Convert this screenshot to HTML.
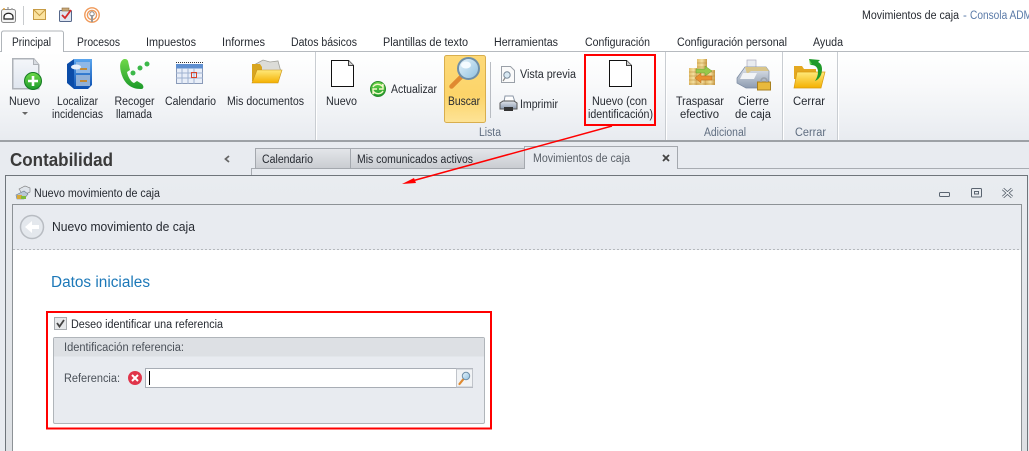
<!DOCTYPE html>
<html><head><meta charset="utf-8"><style>
html,body{margin:0;padding:0;background:#fff;width:1029px;height:451px;overflow:hidden}
svg{display:block}
text{font-family:"Liberation Sans",sans-serif;font-size:11.5px;fill:#262a31}
.g{fill:#5f6d80}
</style></head><body>
<svg xmlns="http://www.w3.org/2000/svg" width="1029" height="451" viewBox="0 0 1029 451">
<defs>
<linearGradient id="rib" x1="0" y1="0" x2="0" y2="1"><stop offset="0" stop-color="#fff"/><stop offset=".35" stop-color="#f9fafb"/><stop offset="1" stop-color="#e8ebf0"/></linearGradient>
<linearGradient id="bus" x1="0" y1="0" x2="0" y2="1"><stop offset="0" stop-color="#fdd978"/><stop offset=".6" stop-color="#fcd469"/><stop offset="1" stop-color="#fde397"/></linearGradient>
<linearGradient id="tab" x1="0" y1="0" x2="0" y2="1"><stop offset="0" stop-color="#e4e6ea"/><stop offset="1" stop-color="#c9ccd1"/></linearGradient>
<linearGradient id="hdr" x1="0" y1="0" x2="0" y2="1"><stop offset="0" stop-color="#e9ecf0"/><stop offset="1" stop-color="#dde0e4"/></linearGradient>
<linearGradient id="fold" x1="0" y1="0" x2="0" y2="1"><stop offset="0" stop-color="#ffe97a"/><stop offset="1" stop-color="#f4b000"/></linearGradient>
<linearGradient id="blue" x1="0" y1="0" x2="0" y2="1"><stop offset="0" stop-color="#5aa5ee"/><stop offset="1" stop-color="#0b4fb0"/></linearGradient>
<linearGradient id="grn" x1="0" y1="0" x2="0" y2="1"><stop offset="0" stop-color="#6fd84a"/><stop offset="1" stop-color="#1c9a2a"/></linearGradient>
<linearGradient id="lens" x1="0" y1="0" x2="1" y2="1"><stop offset="0" stop-color="#e8f4fb"/><stop offset="1" stop-color="#8fc0e0"/></linearGradient>
<linearGradient id="doc" x1="0" y1="0" x2="0" y2="1"><stop offset="0" stop-color="#f4f6fa"/><stop offset="1" stop-color="#dfe5ee"/></linearGradient>
<linearGradient id="coin" x1="0" y1="0" x2="1" y2="0"><stop offset="0" stop-color="#e2bd6a"/><stop offset=".5" stop-color="#f3dfa0"/><stop offset="1" stop-color="#c99a45"/></linearGradient>
<linearGradient id="reg" x1="0" y1="0" x2="0" y2="1"><stop offset="0" stop-color="#dfe4ea"/><stop offset="1" stop-color="#8d9bb0"/></linearGradient>
</defs>

<!-- ribbon -->
<rect x="0" y="52" width="1029" height="88" fill="url(#rib)"/>
<rect x="0" y="51" width="1029" height="1" fill="#b6babf"/>
<rect x="0" y="140" width="1029" height="2" fill="#9da1a6"/>
<rect x="0" y="142" width="1029" height="309" fill="#e8ebf0"/>
<path d="M1.500 52V33a2 2 0 0 1 2-2h58a2 2 0 0 1 2 2v19" fill="#fff" stroke="#b0b5ba"/>
<rect x="2" y="50" width="61" height="3" fill="#fff"/>

<!-- group separators -->
<g fill="#c9cdd2"><rect x="315" y="52" width="1" height="88"/><rect x="665" y="52" width="1" height="88"/><rect x="782" y="52" width="1" height="88"/><rect x="837" y="52" width="1" height="88"/></g>
<g fill="#fff"><rect x="316" y="52" width="1" height="88"/><rect x="666" y="52" width="1" height="88"/><rect x="783" y="52" width="1" height="88"/><rect x="838" y="52" width="1" height="88"/></g>

<!-- quick access -->
<rect x="1.500" y="9.500" width="14" height="13" rx="2" fill="#f4f4f4" stroke="#8a8a8a"/>
<path d="M4 17c0-5 9-5 9 0v2H4z" fill="#fff" stroke="#222" stroke-width="1.200"/>
<circle cx="4" cy="9" r="1" fill="#e2a33c"/><circle cx="8" cy="8" r="1" fill="#aaa"/><circle cx="12" cy="9" r="1" fill="#aaa"/>
<rect x="23" y="6" width="1" height="19" fill="#c8cbce"/>
<rect x="33.500" y="9.500" width="12" height="10" fill="#fbe3a0" stroke="#c79c45"/>
<path d="M33.500 9.500l6 6 6-6" fill="none" stroke="#c79c45"/>
<rect x="59.500" y="10.500" width="12" height="11" rx="1" fill="#dfe6f2" stroke="#55678a"/>
<rect x="62" y="8" width="7" height="3" fill="#c8a878" stroke="#8a6a3a" stroke-width=".6"/>
<path d="M62 15l3 3 6-8" fill="none" stroke="#d32a2a" stroke-width="1.800"/>
<g fill="none" stroke="#f09a5a" stroke-width="1.400"><circle cx="92" cy="15" r="7.200"/><circle cx="92" cy="15" r="4.600"/></g>
<circle cx="92" cy="14" r="2.200" fill="#fff" stroke="#888"/><rect x="91" y="15" width="2" height="7" fill="#999"/>

<!-- top title -->
<text x="862" y="19" textLength="97" lengthAdjust="spacingAndGlyphs">Movimientos de caja</text>
<text x="963" y="19" style="fill:#5a7aa8">-</text>
<text x="970" y="19" textLength="62" lengthAdjust="spacingAndGlyphs" style="fill:#5a7aa8">Consola ADM</text>

<!-- tab labels -->
<text x="12" y="46" textLength="39" lengthAdjust="spacingAndGlyphs">Principal</text>
<text x="77" y="46" textLength="43" lengthAdjust="spacingAndGlyphs">Procesos</text>
<text x="146" y="46" textLength="50" lengthAdjust="spacingAndGlyphs">Impuestos</text>
<text x="222" y="46" textLength="43" lengthAdjust="spacingAndGlyphs">Informes</text>
<text x="291" y="46" textLength="66" lengthAdjust="spacingAndGlyphs">Datos básicos</text>
<text x="383" y="46" textLength="85" lengthAdjust="spacingAndGlyphs">Plantillas de texto</text>
<text x="494" y="46" textLength="64" lengthAdjust="spacingAndGlyphs">Herramientas</text>
<text x="585" y="46" textLength="65" lengthAdjust="spacingAndGlyphs">Configuración</text>
<text x="677" y="46" textLength="110" lengthAdjust="spacingAndGlyphs">Configuración personal</text>
<text x="813" y="46" textLength="30" lengthAdjust="spacingAndGlyphs">Ayuda</text>

<!-- ribbon labels -->
<text x="9" y="105" textLength="31" lengthAdjust="spacingAndGlyphs">Nuevo</text>
<path d="M22 112h6l-3 3z" fill="#666"/>
<text x="57" y="105" textLength="41" lengthAdjust="spacingAndGlyphs">Localizar</text>
<text x="52" y="118" textLength="51" lengthAdjust="spacingAndGlyphs">incidencias</text>
<text x="114.500" y="105" textLength="40" lengthAdjust="spacingAndGlyphs">Recoger</text>
<text x="116" y="118" textLength="36" lengthAdjust="spacingAndGlyphs">llamada</text>
<text x="165" y="105" textLength="51" lengthAdjust="spacingAndGlyphs">Calendario</text>
<text x="227" y="105" textLength="77" lengthAdjust="spacingAndGlyphs">Mis documentos</text>
<text x="326" y="105" textLength="31" lengthAdjust="spacingAndGlyphs">Nuevo</text>
<text x="391" y="93" textLength="46" lengthAdjust="spacingAndGlyphs">Actualizar</text>
<rect x="444.500" y="55.500" width="41" height="67" rx="2" fill="url(#bus)" stroke="#d8ae4e"/>
<text x="448" y="105" textLength="32" lengthAdjust="spacingAndGlyphs">Buscar</text>
<rect x="490" y="62" width="1" height="56" fill="#b8bcc2"/>
<text x="520" y="78" textLength="56" lengthAdjust="spacingAndGlyphs">Vista previa</text>
<text x="520" y="108" textLength="38" lengthAdjust="spacingAndGlyphs">Imprimir</text>
<text x="592" y="105" textLength="55" lengthAdjust="spacingAndGlyphs">Nuevo (con</text>
<text x="588" y="118" textLength="65" lengthAdjust="spacingAndGlyphs">identificación)</text>
<text x="676" y="105" textLength="48" lengthAdjust="spacingAndGlyphs">Traspasar</text>
<text x="680" y="118" textLength="39" lengthAdjust="spacingAndGlyphs">efectivo</text>
<text x="738" y="105" textLength="31" lengthAdjust="spacingAndGlyphs">Cierre</text>
<text x="735" y="118" textLength="36" lengthAdjust="spacingAndGlyphs">de caja</text>
<text x="793" y="105" textLength="32" lengthAdjust="spacingAndGlyphs">Cerrar</text>
<text class="g" x="479" y="136" textLength="22" lengthAdjust="spacingAndGlyphs">Lista</text>
<text class="g" x="704" y="136" textLength="42" lengthAdjust="spacingAndGlyphs">Adicional</text>
<text class="g" x="795" y="136" textLength="31" lengthAdjust="spacingAndGlyphs">Cerrar</text>

<!-- icons: nuevo -->
<path d="M12.750 58.750h21l5 6v24h-26z" fill="url(#doc)" stroke="#aeb2b8" stroke-width="1.500"/>
<path d="M33.500 58.500v6h5" fill="#d8dce2" stroke="#aeb2b8"/>
<circle cx="33" cy="81" r="8.500" fill="url(#grn)" stroke="#137a22"/>
<path d="M33 76v10M28 81h10" stroke="#fff" stroke-width="2.600"/>
<!-- cabinet -->
<path d="M67 64l7-5v30l-7-6z" fill="#0b4ca8"/>
<path d="M74 59h18v26l-4 4H74z" fill="url(#blue)"/>
<rect x="76" y="62" width="14" height="11" fill="#8fb8e6"/>
<rect x="76" y="75" width="14" height="11" fill="#8fb0d8"/>
<rect x="80" y="68" width="7" height="2" fill="#c08a3a"/><rect x="80" y="80" width="7" height="2" fill="#c08a3a"/>
<ellipse cx="76" cy="67" rx="5" ry="2.500" fill="#e8f0fa"/>
<!-- phone -->
<path d="M124 59c-5 2-5 10-1 19 4 8 10 11 18 11 3 0 3-3 1-5l-5-3-3 2c-3-1-6-6-7-11l3-2-2-9c-1-2-2-2-4-2z" fill="url(#grn)"/>
<circle cx="133" cy="73" r="2.500" fill="#3cb84a"/><circle cx="140" cy="68" r="2.500" fill="#3cb84a"/><circle cx="147" cy="64" r="2.500" fill="#3cb84a"/>
<!-- calendar -->
<rect x="176.500" y="64.500" width="26" height="19" fill="#e8eef8" stroke="#8a9ab8"/>
<rect x="176" y="64" width="27" height="4.500" fill="#5f8fd0"/>
<path d="M176 62.500h27" stroke="#333" stroke-dasharray="1 1"/>
<path d="M182 68v16M188 68v16M194 68v16M176 73h27M176 78h27" stroke="#9fb2d0"/>
<rect x="191.500" y="72.500" width="5" height="5" fill="none" stroke="#d8442a"/>
<!-- folder docs -->
<path d="M254 65l9-5 7 2 8-1 3 11-24 4z" fill="#dcdcd8" stroke="#a0a09a" stroke-width=".8"/>
<path d="M252 64h8l2 3v14h-10z" fill="#d8a520"/>
<path d="M257 70h25l-4 13h-26z" fill="url(#fold)" stroke="#c9931a" stroke-width=".6"/>

<!-- doc plain icons -->
<path d="M331.500 60.500h17l5 5v21h-22z" fill="#fff" stroke="#111"/><path d="M348.500 60.500v5h5" fill="#d0d0d0" stroke="#111" stroke-width=".8"/>
<path d="M609.500 60.500h17l5 5v21h-22z" fill="#fff" stroke="#111"/><path d="M626.500 60.500v5h5" fill="#d0d0d0" stroke="#111" stroke-width=".8"/>
<!-- actualizar -->
<circle cx="378" cy="89" r="7.500" fill="url(#grn)" stroke="#2a8a2a"/>
<path d="M373 87a5.500 5 0 0 1 9-1l1-2v5h-4M383 91a5.500 5 0 0 1-9 1l-1 2v-5h4" fill="none" stroke="#f4f7c8" stroke-width="1.400"/>
<!-- buscar -->
<path d="M451.500 86.500l9.500-9.500" stroke="#e08a30" stroke-width="4.500" stroke-linecap="round"/>
<circle cx="468.500" cy="68.500" r="10.500" fill="url(#lens)" stroke="#6f8fa8" stroke-width="2"/>
<ellipse cx="466" cy="65" rx="5" ry="3.500" fill="#f4fbff"/>
<!-- vista previa -->
<path d="M501.500 66.500h9l4 4v12h-13z" fill="#fafafa" stroke="#9aa0a8"/>
<circle cx="507" cy="75" r="3.200" fill="#d8e8f2" stroke="#7a8a9a"/><path d="M505 78l-2 3" stroke="#8a8a8a" stroke-width="1.200"/>
<!-- imprimir -->
<path d="M505 96h8l2 6h-11z" fill="#fff" stroke="#8a96a5"/>
<path d="M500 103l3-2h11l3 2v6h-17z" fill="url(#reg)" stroke="#555"/>
<rect x="504" y="107" width="9" height="4" fill="#333"/>
<!-- traspasar -->
<g fill="url(#coin)"><rect x="689" y="68" width="9" height="17"/><rect x="697" y="59" width="10" height="26"/><rect x="706" y="70" width="9" height="15"/></g>
<g stroke="#b88a3a" stroke-width=".7" opacity=".7"><path d="M689 72h26M689 76h26M689 80h26M689 84h26M697 63h10M697 67h10"/></g>
<path d="M696 69h9v-3l7 5-7 5v-3h-9z" fill="#96c84a" stroke="#6a9a30" stroke-width=".5"/>
<path d="M712 76h-11v-3l-6 5 6 5v-3h11z" fill="#e89030" stroke="#b86a20" stroke-width=".5"/>
<!-- cierre -->
<rect x="747" y="60" width="9" height="10" fill="#e9ecf0" stroke="#aab" stroke-width=".7"/>
<path d="M737 78l8-11h21l3 4v10l-12 7h-11l-9-5z" fill="url(#reg)" stroke="#7888a0" stroke-width=".7"/>
<path d="M745 67h21l3 4h-18l-4 3z" fill="#d9c58a"/>
<path d="M743 73h14l-3 6h-14z" fill="#f2f4f6"/>
<rect x="757.500" y="82" width="13" height="8" fill="#e8b93c" stroke="#a8801f"/>
<path d="M761 82v-1a3 3 0 0 1 6 0v1" fill="none" stroke="#9aa0a8" stroke-width="1.600"/>
<!-- cerrar -->
<path d="M794 66h8l2 3h12v10h-22z" fill="#e4a820"/>
<path d="M797 72h28l-4 16h-27z" fill="url(#fold)" stroke="#d89a10" stroke-width=".7"/>
<path d="M809 59l2 6c5 0 7 3 7 7 0 3-1 6-3 9 5-2 7-7 7-12 0-4-2-6-4-7l2-2z" fill="#1f9a2a"/>
<path d="M809 59l3 5-2 1z" fill="#5ed050"/>

<!-- red box top -->
<rect x="585" y="55" width="70" height="70" fill="none" stroke="#f00" stroke-width="2"/>

<!-- left pane header -->
<text x="10" y="166" textLength="103" lengthAdjust="spacingAndGlyphs" style="font-size:18px;font-weight:bold;fill:#3a3a3a">Contabilidad</text>
<path d="M229 156l-3.500 3 3.500 3" fill="none" stroke="#666" stroke-width="1.800"/>

<!-- doc tabs -->
<path d="M251.500 175v-6.500H1029" fill="none" stroke="#a8acb2"/>
<rect x="255.500" y="148.500" width="95" height="20" fill="url(#tab)" stroke="#a4a8ae"/>
<rect x="350.500" y="148.500" width="174" height="20" fill="url(#tab)" stroke="#a4a8ae"/>
<path d="M524.500 169v-22.500h153V169" fill="#e8ebf0" stroke="#a4a8ae"/>
<rect x="525" y="165" width="152" height="5" fill="#e8ebf0"/>
<text x="262" y="163" textLength="51" lengthAdjust="spacingAndGlyphs">Calendario</text>
<text x="357" y="163" textLength="116" lengthAdjust="spacingAndGlyphs">Mis comunicados activos</text>
<text x="533" y="162" textLength="97" lengthAdjust="spacingAndGlyphs" style="fill:#5a6068">Movimientos de caja</text>
<path d="M663 155l6 6M669 155l-6 6" stroke="#444" stroke-width="1.800"/>

<!-- window -->
<rect x="5.500" y="175.500" width="1022" height="280" fill="url(#hdr)" stroke="#6f757b"/>
<rect x="12.500" y="204.500" width="1009" height="250" fill="#fff" stroke="#8d9296"/>
<rect x="13" y="205" width="1008" height="45" fill="#e8ebf0"/>
<path d="M13 249.500h1008" stroke="#b4b8bc" stroke-dasharray="2 2"/>

<!-- window title -->
<path d="M19 189l6-3 5 2v4l-7 3z" fill="#dfe4ea" stroke="#777" stroke-width=".6"/>
<path d="M16 195l8-4 4 3-4 5h-7z" fill="#b9c7d5" stroke="#6a7a8a" stroke-width=".6"/>
<rect x="17" y="195" width="5" height="4" fill="#d8a93a"/><rect x="21" y="196" width="5" height="3" fill="#7fbb3a"/>
<text x="34" y="197" textLength="126" lengthAdjust="spacingAndGlyphs">Nuevo movimiento de caja</text>
<rect x="939.500" y="192.500" width="10" height="4" rx="1" fill="none" stroke="#5a6470"/>
<rect x="971.500" y="188.500" width="10" height="8.500" rx="1" fill="none" stroke="#5a6470"/>
<rect x="974.500" y="191.500" width="4" height="2.500" fill="none" stroke="#5a6470"/>
<path d="M1003 189l9 8M1012 189l-9 8" stroke="#5a6470" stroke-width="3"/>
<path d="M1003 189l9 8M1012 189l-9 8" stroke="#f2f4f6" stroke-width="1.300"/>

<!-- back -->
<circle cx="32" cy="227" r="11.500" fill="#e4e8ed" stroke="#b8bcc2" stroke-width="1.500"/>
<path d="M39 225h-7v-4l-7 6 7 6v-4h7z" fill="#fff"/>
<text x="52" y="231" textLength="143" lengthAdjust="spacingAndGlyphs" style="font-size:12.500px">Nuevo movimiento de caja</text>

<!-- content -->
<text x="51" y="287" textLength="99" lengthAdjust="spacingAndGlyphs" style="font-size:15.500px;fill:#1c78b8">Datos iniciales</text>

<!-- form -->
<rect x="54.500" y="317.500" width="12" height="12" fill="#e6e8ea" stroke="#a8acb0"/>
<path d="M57 323l2.500 3.500 4.500-6.500" fill="none" stroke="#444" stroke-width="1.800"/>
<text x="71" y="328" textLength="152" lengthAdjust="spacingAndGlyphs">Deseo identificar una referencia</text>
<rect x="53.500" y="337.500" width="431" height="86" rx="1.500" fill="#e8ebf0" stroke="#b0b5ba"/>
<rect x="54" y="338" width="430" height="18.500" fill="#dde0e4"/>
<text x="64" y="351" textLength="120" lengthAdjust="spacingAndGlyphs" style="fill:#4a5058">Identificación referencia:</text>
<text x="64" y="382" textLength="56" lengthAdjust="spacingAndGlyphs" style="fill:#4a5058">Referencia:</text>
<circle cx="135" cy="378" r="7" fill="#e0344a"/>
<path d="M132 375l6 6M138 375l-6 6" stroke="#fff" stroke-width="2"/>
<rect x="145.500" y="368.500" width="327" height="19" fill="#fff" stroke="#a8adb5"/>
<rect x="456.500" y="369" width="16" height="18" fill="#f1f3f5" stroke="#c0c4ca"/>
<path d="M459.500 384l4-5" stroke="#e08a30" stroke-width="2.200" stroke-linecap="round"/>
<circle cx="466" cy="376" r="3.700" fill="url(#lens)" stroke="#6f8fa8"/>
<rect x="149" y="371" width="1" height="14" fill="#000"/>

<!-- red box form -->
<rect x="47" y="312" width="444" height="116.500" fill="none" stroke="#f00" stroke-width="2"/>

<!-- arrow -->
<path d="M612 126L412 181" stroke="#f00" stroke-width="1.500"/>
<path d="M402 184l12-6 2 5z" fill="#f00"/>
</svg>
</body></html>
